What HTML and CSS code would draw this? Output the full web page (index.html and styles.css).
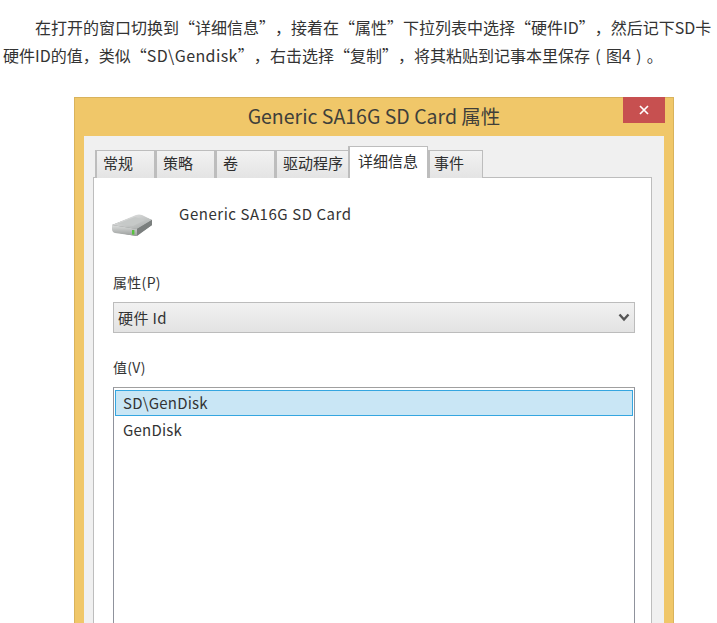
FILE: index.html
```html
<!DOCTYPE html>
<html lang="zh-CN">
<head>
    <meta charset="UTF-8">
    <meta name="viewport" content="width=device-width, initial-scale=1.0">
    <title>硬件ID</title>
    <link rel="stylesheet" href="styles.css">
</head>
<body>

<div class="page">
    <p class="intro">
        <span class="first-line">在打开的窗口切换到“详细信息”<span class="mark">，</span>接着在“属性”下拉列表中选择“硬件ID”<span class="mark">，</span>然后记下SD卡</span>
        <span class="second-line">硬件ID的值<span class="mark">，</span>类似“<span class="latin">SD\Gendisk</span>”<span class="mark">，</span>右击选择“复制”<span class="mark">，</span>将其粘贴到记事本里保存<span class="paren">(</span>图4<span class="paren">)</span><span class="mark">。</span></span>
    </p>

    <!-- 属性窗口 -->
    <div class="window">
        <div class="titlebar">
            <span class="title">Generic SA16G SD Card 属性</span>
            <div class="close">
                <svg width="10" height="10" viewBox="0 0 10 10">
                    <path d="M1 1 L9 9 M9 1 L1 9" stroke="#fff" stroke-width="1.7" fill="none"/>
                </svg>
            </div>
        </div>
        <div class="client">
            <div class="tabs">
                <div class="tab tab-60">常规</div>
                <div class="tab tab-60">策略</div>
                <div class="tab tab-60">卷</div>
                <div class="tab tab-74">驱动程序</div>
                <div class="tab tab-active">详细信息</div>
                <div class="tab tab-55">事件</div>
            </div>
            <div class="panel">
                <div class="device">
                    <svg class="drive" width="44" height="30" viewBox="0 0 44 30">
                        <defs>
                            <linearGradient id="driveTop" x1="0" y1="0" x2="1" y2="1">
                                <stop offset="0" stop-color="#eeeeee"/>
                                <stop offset="1" stop-color="#a4a8a7"/>
                            </linearGradient>
                            <linearGradient id="driveFront" x1="0" y1="0" x2="0" y2="1">
                                <stop offset="0" stop-color="#dcdedd"/>
                                <stop offset="1" stop-color="#9a9d9c"/>
                            </linearGradient>
                        </defs>
                        <path d="M1 15 L27 5 L41 10 L41 15 L25 26 L3 22 Z" fill="#7d8180"/>
                        <path d="M1 15 L25 5 Q28 4 31 5 L41 10 L26 19 Z" fill="url(#driveTop)"/>
                        <path d="M6 14 L24 7 L34 10 L22 16 Z" fill="#c6c9c8"/>
                        <path d="M1 15 L26 19 L26 26 L4 23 Q1 22 1 19 Z" fill="url(#driveFront)"/>
                        <path d="M26 19 L41 10 L41 15 L26 26 Z" fill="#7b7f7e"/>
                        <rect x="21" y="20" width="2.4" height="4.6" fill="#58c23e"/>
                    </svg>
                    <span class="device-name">Generic SA16G SD Card</span>
                </div>

                <div class="label label-prop">属性(P)</div>
                <div class="select">
                    <span>硬件 Id</span>
                    <svg width="12" height="9" viewBox="0 0 12 9">
                        <path d="M1.5 1.5 L6 6.5 L10.5 1.5" stroke="#555" stroke-width="2.4" fill="none"/>
                    </svg>
                </div>

                <div class="label label-value">值(V)</div>
                <div class="listbox">
                    <div class="row row-selected">SD\GenDisk</div>
                    <div class="row">GenDisk</div>
                </div>
            </div>
        </div>
    </div>
</div>

</body>
</html>
```

FILE: styles.css
```css
html, body {
    margin: 0;
    padding: 0;
    background-color: #fff;
}
.page {
    height: 623px;
    overflow: hidden;
    font-family: "Noto Sans CJK SC", "Noto Sans", sans-serif;
    color: #333;
}
.intro {
    margin: 0;
    padding-top: 13px;
    font-size: 16px;
    line-height: 28px;
    white-space: nowrap;
    text-spacing-trim: space-all;
}
.first-line {
    display: block;
    padding-left: 35px;
}
.second-line {
    display: block;
    padding-left: 3px;
}
.mark {
    font-family: "Noto Sans CJK TC", sans-serif;
}
.latin {
    letter-spacing: 0.4px;
}
.paren {
    display: inline-block;
    width: 16px;
    text-align: center;
}
.window {
    width: 600px;
    height: 560px;
    box-sizing: border-box;
    margin: 28px 0 0 74px;
    padding: 0 9px;
    background-color: #f0c769;
    border: 1px solid #d9b35c;
}
.titlebar {
    height: 38px;
    display: flex;
    justify-content: center;
    align-items: center;
    padding-bottom: 3px;
    box-sizing: border-box;
    position: relative;
}
.title {
    font-size: 19.5px;
    color: #3f3f3a;
}
.close {
    position: absolute;
    top: -1px;
    right: -1px;
    width: 42px;
    height: 26px;
    display: flex;
    justify-content: center;
    align-items: center;
    background-color: #c75050;
}
.client {
    height: 520px;
    box-sizing: border-box;
    padding: 11px 12px 0 9px;
    background-color: #f0f0f0;
}
.tabs {
    display: flex;
    align-items: flex-end;
    height: 31px;
    padding-left: 2px;
    position: relative;
    z-index: 1;
    margin-bottom: -1px;
}
.tab {
    height: 28px;
    box-sizing: border-box;
    border: 1px solid #bdbdbd;
    border-bottom: none;
    border-left-width: 2px;
    background: linear-gradient(#f2f2f2, #e4e4e4);
    padding-left: 6px;
    font-size: 15px;
    line-height: 24px;
    color: #2e2e2e;
}
.tab-60 {
    width: 60px;
}
.tab-74 {
    width: 74px;
}
.tab-55 {
    width: 55px;
    padding-left: 4px;
}
.tab-active {
    width: 80px;
    height: 32px;
    margin-left: -1px;
    padding-left: 8px;
    background: #fff;
    line-height: 28px;
}
.panel {
    height: 480px;
    box-sizing: border-box;
    padding: 0 16px 0 19px;
    background-color: #fff;
    border: 1px solid #bdbdbd;
}
.device {
    display: flex;
    height: 84px;
}
.drive {
    margin: 32px 0 0 -2px;
}
.device-name {
    margin: 24px 0 0 24px;
    font-size: 15px;
    line-height: 24px;
    color: #333;
    letter-spacing: 0.55px;
}
.label {
    font-size: 14px;
    line-height: 20px;
    color: #333;
    letter-spacing: 0.3px;
}
.label-prop {
    margin-top: 10px;
}
.label-value {
    margin-top: 24px;
}
.select {
    height: 31px;
    box-sizing: border-box;
    margin-top: 10px;
    padding: 0 4px;
    display: flex;
    justify-content: space-between;
    align-items: center;
    border: 1px solid #bcbcbc;
    background: linear-gradient(#f1f1f1, #e3e3e3);
    font-size: 15px;
    letter-spacing: 0.4px;
    color: #333;
}
.listbox {
    height: 300px;
    box-sizing: border-box;
    margin-top: 10px;
    padding: 2px 1px;
    border: 1px solid #8f929c;
    border-color: #a0a0a0 #8f929c #8f929c #8f929c;
}
.row {
    height: 26px;
    box-sizing: border-box;
    padding-left: 7px;
    font-size: 15px;
    line-height: 26px;
    letter-spacing: 0.2px;
    color: #333;
    border: 1px solid transparent;
}
.row-selected {
    background-color: #c9e6f5;
    border-color: #35a6e0;
    line-height: 24px;
}
```
